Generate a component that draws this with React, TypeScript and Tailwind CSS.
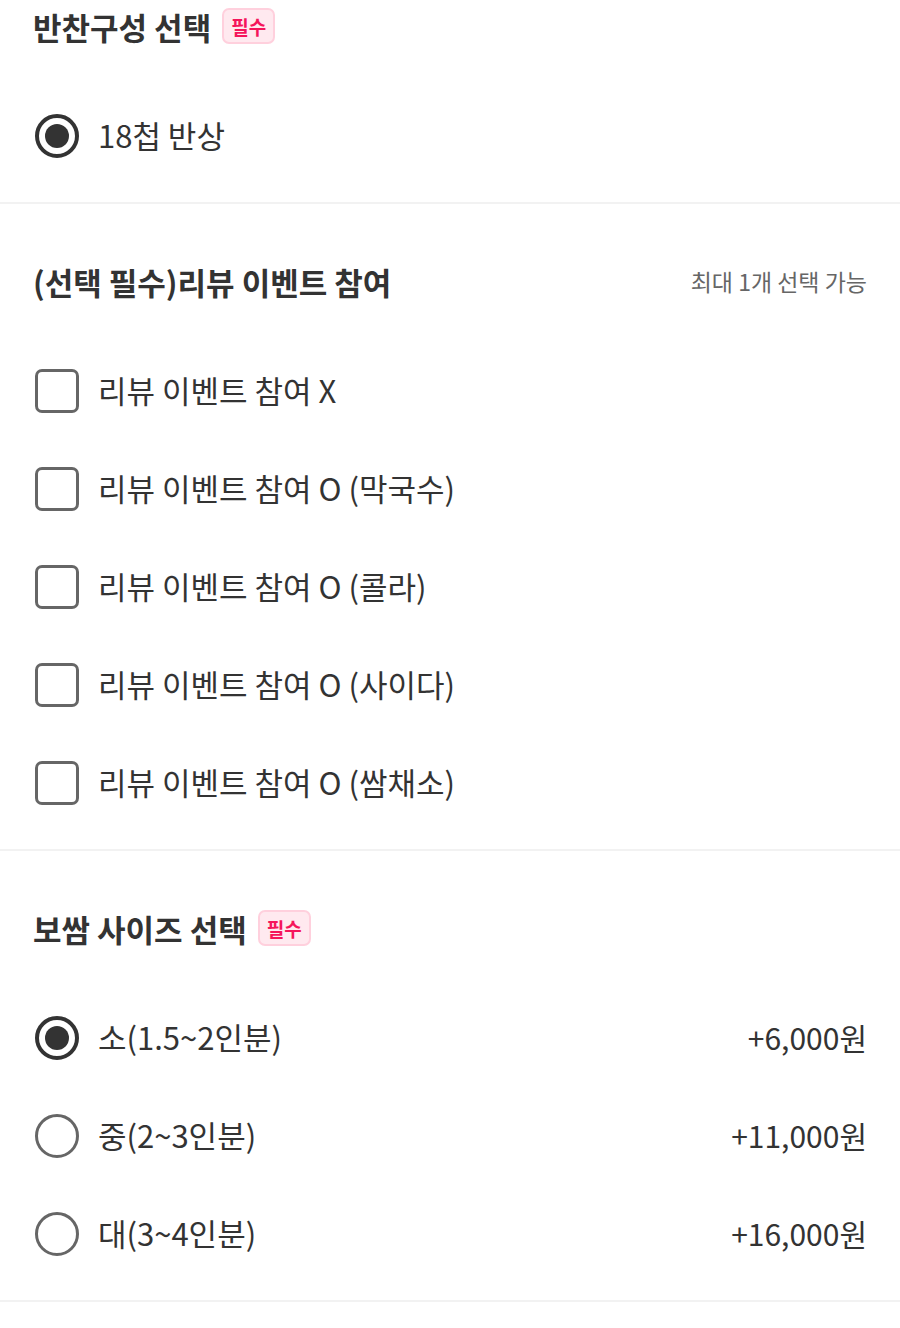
import React, { useState } from "react";

const FONT = "font-['Noto_Sans_CJK_KR','Noto_Sans',sans-serif]";

function Badge() {
  return (
    <span className="ml-[11px] inline-flex h-[36px] w-[53px] items-center justify-center rounded-[7px] border-2 border-[#ffd0dd] bg-[#ffe9ef] text-[19px] font-bold leading-none text-[#f5155b]">
      필수
    </span>
  );
}

function Radio({ checked }: { checked: boolean }) {
  return checked ? (
    <span className="flex h-[44px] w-[44px] shrink-0 items-center justify-center rounded-full border-[4px] border-[#333333]">
      <span className="h-[24px] w-[24px] rounded-full bg-[#333333]" />
    </span>
  ) : (
    <span className="h-[44px] w-[44px] shrink-0 rounded-full border-[3px] border-[#666666]" />
  );
}

function Checkbox({ checked }: { checked: boolean }) {
  return (
    <span
      className={`h-[44px] w-[44px] shrink-0 rounded-[7px] border-[3px] ${
        checked ? "border-[#333333] bg-[#333333]" : "border-[#666666]"
      }`}
    />
  );
}

type Section = {
  title: string;
  required?: boolean;
  note?: string;
  kind: "radio" | "check";
  items: { label: string; price?: string }[];
  first?: boolean;
};

const sections: Section[] = [
  {
    title: "반찬구성 선택",
    required: true,
    kind: "radio",
    items: [{ label: "18첩 반상" }],
    first: true,
  },
  {
    title: "(선택 필수)리뷰 이벤트 참여",
    note: "최대 1개 선택 가능",
    kind: "check",
    items: [
      { label: "리뷰 이벤트 참여 X" },
      { label: "리뷰 이벤트 참여 O (막국수)" },
      { label: "리뷰 이벤트 참여 O (콜라)" },
      { label: "리뷰 이벤트 참여 O (사이다)" },
      { label: "리뷰 이벤트 참여 O (쌈채소)" },
    ],
  },
  {
    title: "보쌈 사이즈 선택",
    required: true,
    kind: "radio",
    items: [
      { label: "소(1.5~2인분)", price: "+6,000원" },
      { label: "중(2~3인분)", price: "+11,000원" },
      { label: "대(3~4인분)", price: "+16,000원" },
    ],
  },
];

export default function App() {
  const [picked, setPicked] = useState<Record<number, number[]>>({
    0: [0],
    1: [],
    2: [0],
  });

  const toggle = (si: number, ii: number, kind: string) => {
    setPicked((prev) => {
      if (kind === "radio") return { ...prev, [si]: [ii] };
      const cur = prev[si] || [];
      return { ...prev, [si]: cur.includes(ii) ? [] : [ii] };
    });
  };

  return (
    <div className={`${FONT} w-[900px] bg-white text-[#333333]`}>
      {sections.map((s, si) => (
        <div key={si} className="border-b-2 border-[#f2f2f2]">
          <div className={`px-[33px] pb-[17px] ${s.first ? "pt-0" : "pt-[51px]"}`}>
            <div className="flex h-[52px] items-center justify-between">
              <div className="flex items-center">
                <h2 className="text-[31px] font-bold leading-none">{s.title}</h2>
                {s.required && <Badge />}
              </div>
              {s.note && (
                <span className="text-[23px] leading-none text-[#666666]">{s.note}</span>
              )}
            </div>
            <div className="mt-[35px] flex flex-col">
              {s.items.map((it, ii) => {
                const on = (picked[si] || []).includes(ii);
                return (
                  <button
                    key={ii}
                    onClick={() => toggle(si, ii, s.kind)}
                    className="flex h-[98px] w-full items-center justify-between pl-[2px] text-left"
                  >
                    <span className="flex items-center gap-[19px]">
                      {s.kind === "radio" ? <Radio checked={on} /> : <Checkbox checked={on} />}
                      <span className="pb-[3px] text-[31px] leading-none">{it.label}</span>
                    </span>
                    {it.price && (
                      <span className="pb-[3px] text-[30px] leading-none">{it.price}</span>
                    )}
                  </button>
                );
              })}
            </div>
          </div>
        </div>
      ))}
    </div>
  );
}
